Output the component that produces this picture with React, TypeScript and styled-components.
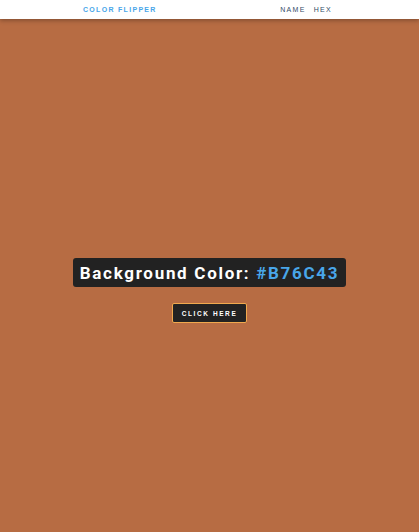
import styled, { createGlobalStyle } from "styled-components";

const GlobalStyle = createGlobalStyle`
  * {
    box-sizing: border-box;
    margin: 0;
    padding: 0;
  }

  body {
    font-family: Roboto, "Liberation Sans", Arial, sans-serif;
    background: #b76c43;
  }
`;

const hex = "#B76C43";

export default function App() {
  return (
    <>
      <GlobalStyle />
      <Nav>
        <NavCenter>
          <Logo>color flipper</Logo>
          <NavLinks>
            <li>name</li>
            <li>hex</li>
          </NavLinks>
        </NavCenter>
      </Nav>
      <Main>
        <Panel>
          Background Color: <Code>{hex}</Code>
        </Panel>
        <FlipButton>click here</FlipButton>
      </Main>
    </>
  );
}

const Nav = styled.nav`
  height: 19px;
  background: #fff;
  box-shadow: 0 2px 4px rgba(0, 0, 0, 0.25);
  display: flex;
  align-items: center;
  position: relative;
  z-index: 1;
`;

const NavCenter = styled.div`
  width: 249px;
  margin: 0 auto 0 83px;
  display: flex;
  justify-content: space-between;
  align-items: center;
`;

const Logo = styled.h4`
  font-family: "Liberation Sans", Arial, sans-serif;
  font-size: 7px;
  font-weight: 700;
  letter-spacing: 1.3px;
  text-transform: uppercase;
  color: #49a6e9;
`;

const NavLinks = styled.ul`
  list-style: none;
  display: flex;
  gap: 8px;

  li {
    font-family: "Liberation Sans", Arial, sans-serif;
    font-size: 7px;
    letter-spacing: 1.3px;
    text-transform: uppercase;
    color: #324d67;
  }
`;

const Main = styled.main`
  min-height: calc(100vh - 19px);
  padding-top: 30px;
  display: flex;
  flex-direction: column;
  align-items: center;
  justify-content: center;
`;

const Panel = styled.h2`
  background: #222;
  color: #fff;
  font-size: 17px;
  font-weight: 700;
  letter-spacing: 1.7px;
  padding: 3px 7px;
  border-radius: 3px;
  height: 29px;
  display: flex;
  align-items: center;
  white-space: pre;
`;

const Code = styled.span`
  color: #49a6e9;
`;

const FlipButton = styled.button`
  margin-top: 16px;
  width: 75px;
  height: 20px;
  background: #222;
  color: #fff;
  border: 1px solid #f1a94e;
  border-radius: 2px;
  font-family: "Liberation Sans", Arial, sans-serif;
  font-size: 6.5px;
  font-weight: 900;
  letter-spacing: 1.6px;
  text-transform: uppercase;
  cursor: pointer;
`;
